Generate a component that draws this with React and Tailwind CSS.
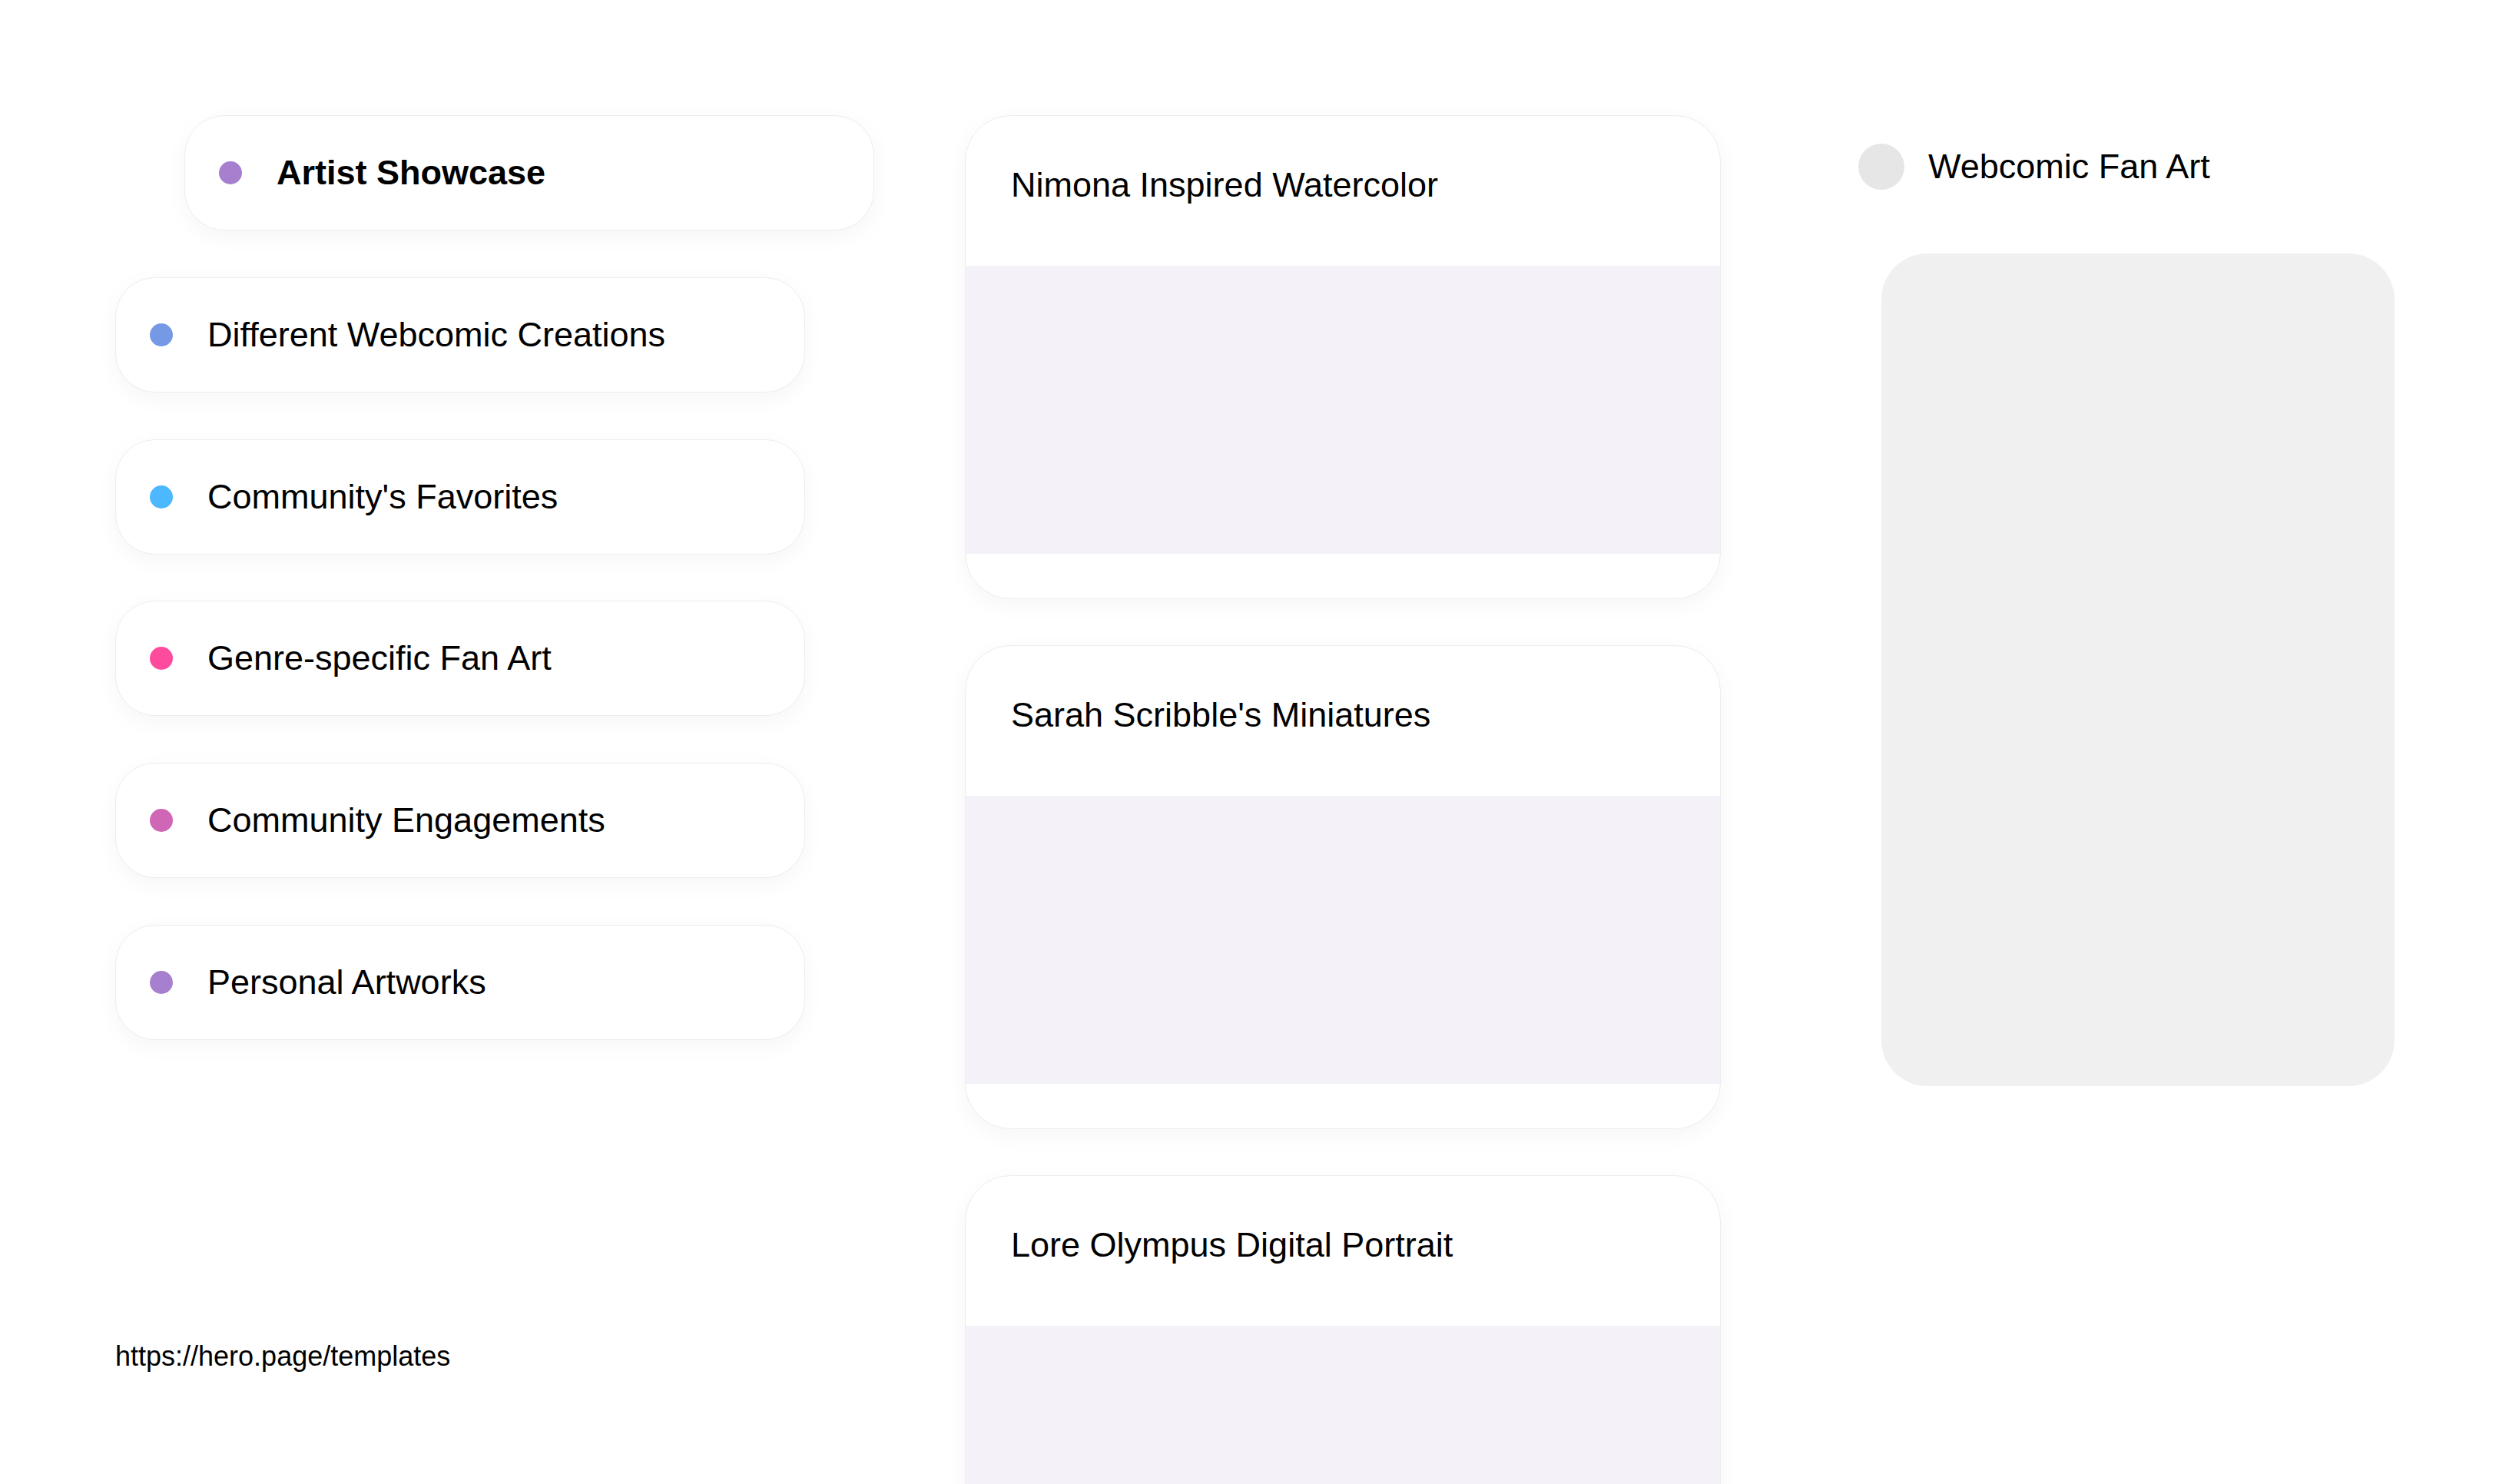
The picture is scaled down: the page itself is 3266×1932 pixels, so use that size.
import React from "react";

const pills = [
  { label: "Different Webcomic Creations", color: "bg-[#7699e6]" },
  { label: "Community's Favorites", color: "bg-[#4cb8ff]" },
  { label: "Genre-specific Fan Art", color: "bg-[#ff4b9d]" },
  { label: "Community Engagements", color: "bg-[#cf66b6]" },
  { label: "Personal Artworks", color: "bg-[#a67fcf]" },
];

const cards = [
  "Nimona Inspired Watercolor",
  "Sarah Scribble's Miniatures",
  "Lore Olympus Digital Portrait",
];

function Pill({ label, color, active }) {
  return (
    <div
      className={
        "flex h-[150px] w-[898px] items-center rounded-[52px] border border-[#ededed] bg-white pl-[44px] shadow-[0_8px_30px_rgba(0,0,0,0.04)] " +
        (active ? "ml-[90px]" : "")
      }
    >
      <span className={"h-[30px] w-[30px] shrink-0 rounded-full " + color} />
      <span
        className={
          "ml-[45px] text-[45px] leading-[52px] text-black " +
          (active ? "font-bold" : "font-normal")
        }
      >
        {label}
      </span>
    </div>
  );
}

function Card({ title }) {
  return (
    <div className="h-[630px] w-[984px] overflow-hidden rounded-[60px] border border-[#ededed] bg-white shadow-[0_8px_30px_rgba(0,0,0,0.04)]">
      <div className="h-[195px] pl-[59px] pt-[56px]">
        <h3 className="text-[45px] leading-[67px] font-normal text-black">{title}</h3>
      </div>
      <div className="h-[375px] bg-[#f4f2f8]" />
      <div className="h-[60px]" />
    </div>
  );
}

export default function App() {
  return (
    <div
      className="flex min-h-screen items-start bg-white pl-[150px] pt-[150px] text-black"
      style={{ fontFamily: '"Liberation Sans", Arial, Helvetica, sans-serif' }}
    >
      <div className="flex w-[990px] shrink-0 flex-col">
        <div className="flex flex-col gap-[60.8px]">
          <Pill label="Artist Showcase" color="bg-[#a67fcf]" active />
          {pills.map((p) => (
            <Pill key={p.label} label={p.label} color={p.color} />
          ))}
        </div>
        <div className="mt-[391px] text-[36px] leading-[41px]">https://hero.page/templates</div>
      </div>

      <div className="ml-[116px] flex w-[984px] shrink-0 flex-col gap-[60px]">
        {cards.map((c) => (
          <Card key={c} title={c} />
        ))}
      </div>

      <div className="ml-[179px] flex w-[702px] shrink-0 flex-col pt-[37px]">
        <div className="flex h-[60px] items-center gap-[31px]">
          <span className="h-[60px] w-[60px] shrink-0 rounded-full bg-[#e6e6e6]" />
          <span className="text-[45px] leading-[52px]">Webcomic Fan Art</span>
        </div>
        <div className="ml-[30px] mt-[83px] h-[1084px] w-[668px] rounded-[60px] bg-[#f0f0f0]" />
      </div>
    </div>
  );
}
